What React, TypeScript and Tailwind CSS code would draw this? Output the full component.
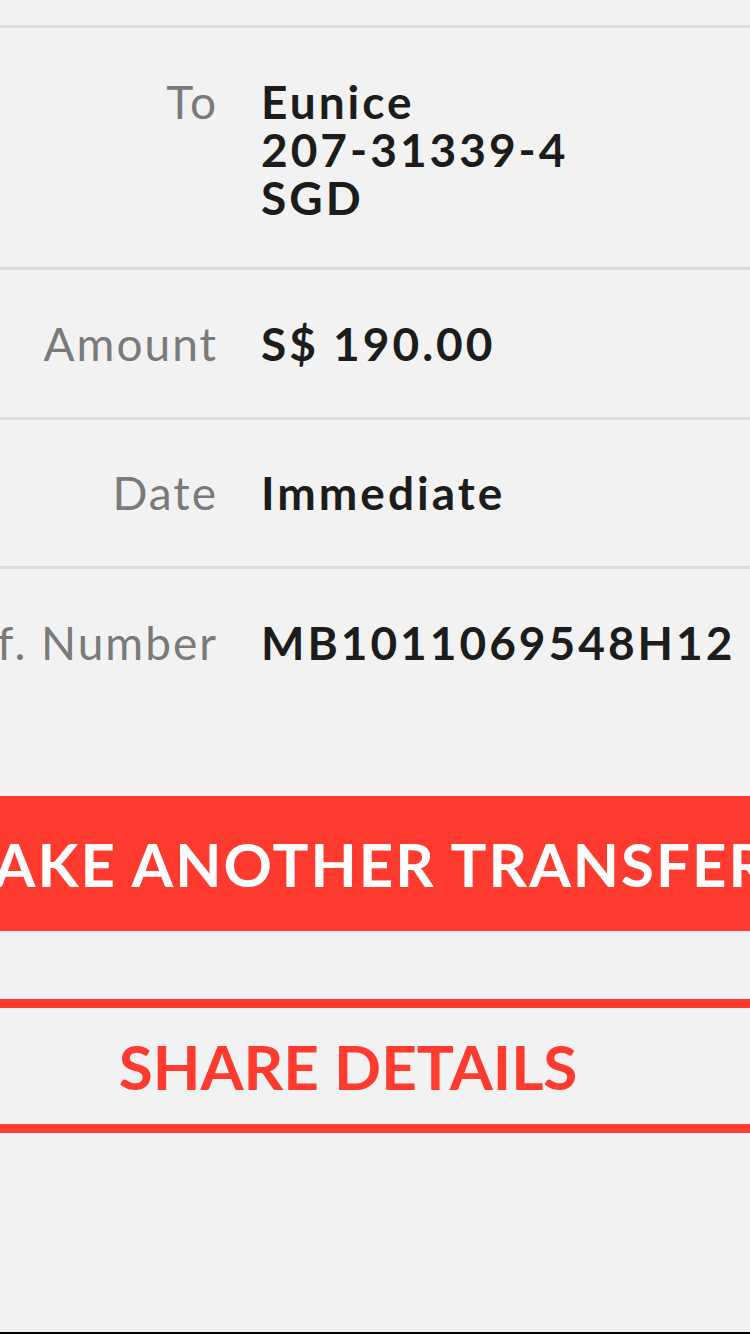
const rows = [
  { label: "Amount", value: "S$ 190.00", h: "h-[147px]" },
  { label: "Date", value: "Immediate", h: "h-[146px]" },
  { label: "Ref. Number", value: "MB1011069548H12", h: "h-[147px]" },
];

function Divider() {
  return <div className="h-[3px] w-full bg-[#dcdcdc]" />;
}

export default function App() {
  return (
    <div className="flex h-[1334px] w-[750px] flex-col overflow-hidden bg-[#f2f2f2] font-['Lato','Noto_Sans',sans-serif]">
      <div className="h-[25px] shrink-0" />
      <Divider />

      {/* Recipient */}
      <div className="flex h-[239px] shrink-0 items-start gap-[43px] pt-[50px]">
        <div className="flex w-[218px] shrink-0 justify-end">
          <span className="whitespace-nowrap text-[46px] leading-[48px] tracking-[2px] text-[#7a7a7a]">
            To
          </span>
        </div>
        <div className="flex flex-col whitespace-nowrap text-[46px] font-bold leading-[48px] tracking-[3px] text-[#1c1c1c]">
          <span>Eunice</span>
          <span>207-31339-4</span>
          <span>SGD</span>
        </div>
      </div>

      {rows.map((row) => (
        <div key={row.label} className="shrink-0">
          <Divider />
          <div className={`flex ${row.h} items-center gap-[43px]`}>
            <div className="flex w-[218px] shrink-0 justify-end">
              <span className="whitespace-nowrap text-[46px] leading-[48px] tracking-[2px] text-[#7a7a7a]">
                {row.label}
              </span>
            </div>
            <span className="whitespace-nowrap text-[46px] font-bold leading-[48px] tracking-[3px] text-[#1c1c1c]">
              {row.value}
            </span>
          </div>
        </div>
      ))}

      <div className="h-[80px] shrink-0" />

      <button className="flex h-[135px] w-full shrink-0 items-center justify-center bg-[#ff3b30] pr-[46px]">
        <span className="whitespace-nowrap text-[60px] font-bold leading-none tracking-[2px] text-white">
          MAKE ANOTHER TRANSFER
        </span>
      </button>

      <div className="h-[68px] shrink-0" />

      <button className="flex h-[134px] w-full shrink-0 items-center justify-center border-y-[9px] border-[#ff3b30] pr-[54px]">
        <span className="whitespace-nowrap text-[62px] font-bold leading-none text-[#ff3b30]">
          SHARE DETAILS
        </span>
      </button>

      <div className="flex-1" />
      <div className="h-[2px] shrink-0 bg-black" />
    </div>
  );
}
